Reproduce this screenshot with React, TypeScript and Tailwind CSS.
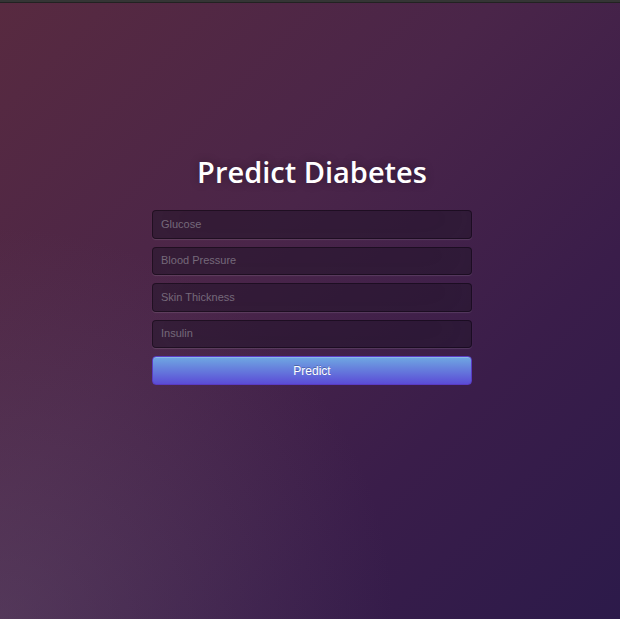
export default function App() {
  const fields = ["Glucose", "Blood Pressure", "Skin Thickness", "Insulin"];

  return (
    <div className="w-[620px] h-[619px] overflow-hidden flex flex-col bg-[#2c1a4a]">
      {/* window top strip */}
      <div className="h-[3px] bg-[#353535] border-b border-[#222]" />

      <main className="flex-1 bg-[radial-gradient(ellipse_at_0%_100%,rgba(110,95,120,0.35)_0%,rgba(110,95,120,0)_45%),linear-gradient(135deg,#582a40_0%,#4a2549_40%,#3a1d4a_70%,#2c1a4a_100%)]">
        <div className="ml-[152px] w-[320px] pt-[148px]">
          <h1 className="text-center text-white text-[29px] leading-[42px] font-semibold mb-[17px] [font-family:'Open_Sans',sans-serif] [text-shadow:0_0_10px_rgba(0,0,0,0.3)]">
            Predict Diabetes
          </h1>

          <form className="flex flex-col gap-2 [font-family:'Liberation_Sans',Arial,sans-serif]">
            {fields.map((f) => (
              <input
                key={f}
                type="text"
                placeholder={f}
                className="h-[28.5px] w-full px-[8px] pb-[1px] text-[11px] text-white rounded-[4px] bg-[rgba(20,8,28,0.45)] border border-[rgba(0,0,0,0.35)] outline-none placeholder:text-[#75697a] shadow-[inset_0_-5px_45px_rgba(100,100,100,0.1),0_1px_1px_rgba(255,255,255,0.12)]"
              />
            ))}
            <button
              type="button"
              className="h-[29px] w-full rounded-[4px] text-[12px] text-white border border-[#5a3cc4] bg-[linear-gradient(to_bottom,#6fa8e2,#5b4cd6)] [text-shadow:0_-1px_0_rgba(0,0,0,0.25)] shadow-[inset_0_1px_0_rgba(255,255,255,0.2)]"
            >
              Predict
            </button>
          </form>
        </div>
      </main>
    </div>
  );
}
